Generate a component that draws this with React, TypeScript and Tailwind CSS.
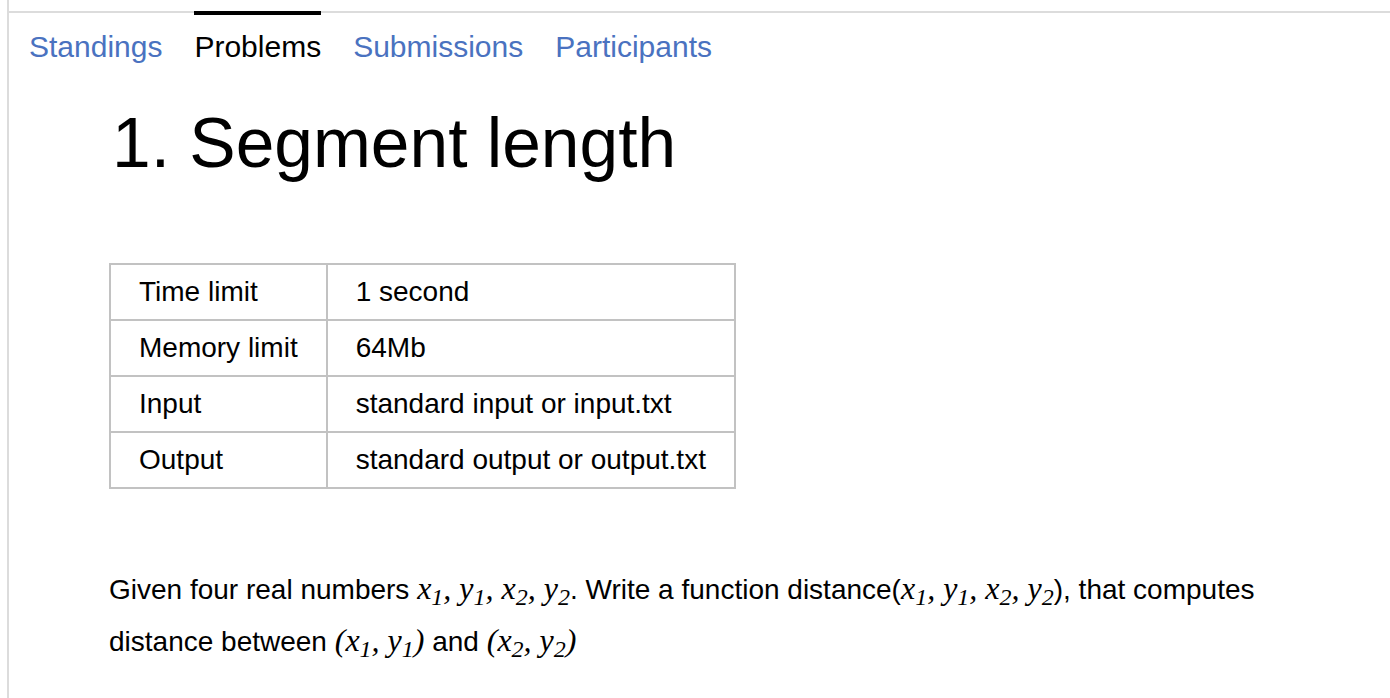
const tabs = [
  { name: 'Standings', active: false },
  { name: 'Problems', active: true },
  { name: 'Submissions', active: false },
  { name: 'Participants', active: false }
]

const limits = [
  ['Time limit', '1 second'],
  ['Memory limit', '64Mb'],
  ['Input', 'standard input or input.txt'],
  ['Output', 'standard output or output.txt']
]

function V ({ n, s }: { n: string, s: string }): JSX.Element {
  return (
    <>
      {n}<sub>{s}</sub>
    </>
  )
}

function Math ({ children }: { children: React.ReactNode }): JSX.Element {
  return <span className="italic text-[32px] font-['Liberation_Serif',serif]">{children}</span>
}

export default function App (): JSX.Element {
  return (
    <div className="min-h-screen bg-white font-['Liberation_Sans',Arial,sans-serif] text-black">
      <div className="ml-[7px] min-h-screen border-l-2 border-[#dcdcdc] pt-[11px]">
        <nav className="flex gap-[32px] border-t-2 border-[#dcdcdc] pl-[20px]">
          {tabs.map(t => (
            <div
              key={t.name}
              className={`-mt-[2px] border-t-4 pt-[14px] text-[30px] leading-[36px] ${t.active ? 'border-black text-black' : 'border-transparent text-[#4a72c0]'}`}
            >
              {t.name}
            </div>
          ))}
        </nav>

        <div className="pl-[100px]">
          <h1 className="mt-[38px] pl-[3px] text-[69.5px] leading-[80px]">1. Segment length</h1>

          <table className="mt-[80px] border-collapse border-2 border-[#c2c2c2] text-[28px] leading-[30px]">
            <tbody>
              {limits.map(([k, v]) => (
                <tr key={k}>
                  <td className="border-2 border-[#c2c2c2] px-[28px] py-[12px] whitespace-nowrap">{k}</td>
                  <td className="border-2 border-[#c2c2c2] px-[28px] py-[12px] whitespace-nowrap">{v}</td>
                </tr>
              ))}
            </tbody>
          </table>

          <p className="mt-[74px] text-[28px] leading-[50px]">
            Given four real numbers <Math><V n="x" s="1" />, <V n="y" s="1" />, <V n="x" s="2" />, <V n="y" s="2" /></Math>. Write a function distance(<Math><V n="x" s="1" />, <V n="y" s="1" />, <V n="x" s="2" />, <V n="y" s="2" /></Math>), that computes
            <br />
            distance between <Math>(<V n="x" s="1" />, <V n="y" s="1" />)</Math> and <Math>(<V n="x" s="2" />, <V n="y" s="2" />)</Math>
          </p>
        </div>
      </div>
    </div>
  )
}
